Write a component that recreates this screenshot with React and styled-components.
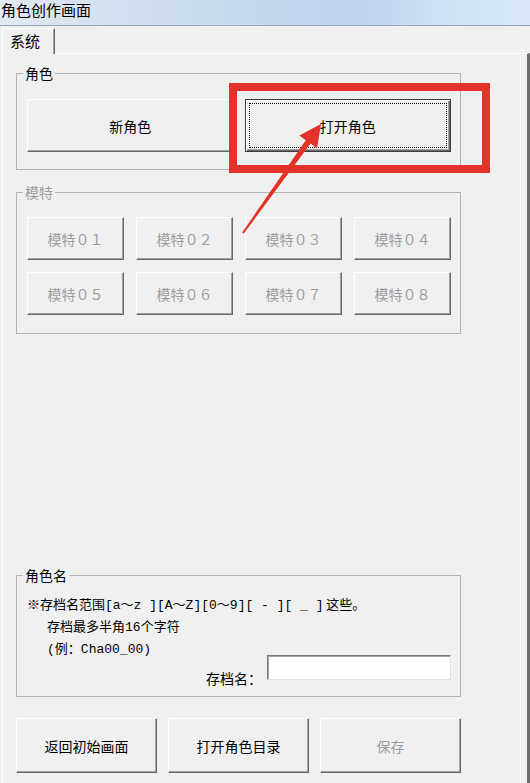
import React from "react";
import styled, { createGlobalStyle } from "styled-components";

const GlobalStyle = createGlobalStyle`
  html, body {
    margin: 0;
    padding: 0;
    background: #f0f0f0;
  }
  body {
    font-family: "Noto Sans CJK SC", "Noto Sans", sans-serif;
    color: #000;
    overflow: hidden;
  }
`;

const Window = styled.div`
  position: relative;
  width: 530px;
  height: 783px;
  display: flex;
  flex-direction: column;
  background: #f0f0f0;
  overflow: hidden;
`;

const TitleBar = styled.div`
  flex: none;
  height: 26px;
  padding: 1px 0 0 1px;
  box-sizing: border-box;
  background: linear-gradient(
    90deg,
    #e2e9f1 0%,
    #d3e1ef 20%,
    #c6d9ee 45%,
    #bcd2ee 68%,
    #cde0f5 82%,
    #d8e8f9 100%
  );
  border-bottom: 1px solid #98a6b6;
  font-size: 15px;
  line-height: 18px;
  white-space: nowrap;
`;

const TabStrip = styled.div`
  flex: none;
  height: 27px;
  display: flex;
  align-items: flex-end;
  padding-left: 2px;
`;

const Tab = styled.div`
  position: relative;
  z-index: 1;
  width: 53px;
  height: 26px;
  margin-bottom: -1px;
  box-sizing: border-box;
  padding-left: 7px;
  background: #f0f0f0;
  border-top: 1px solid #fff;
  border-left: 1px solid #fff;
  border-right: 1px solid #696969;
  box-shadow: inset -1px 0 0 #a0a0a0;
  font-size: 15px;
  line-height: 24px;
`;

const Panel = styled.div`
  flex: 1;
  min-height: 0;
  margin-left: 2px;
  display: flex;
  flex-direction: column;
  padding: 11px 0 10px 13px;
  border-top: 1px solid #fff;
  border-left: 1px solid #fff;
  border-right: 3px solid #6d6d6d;
`;

const Group = styled.fieldset`
  margin: ${(p) => p.$margin || "0"};
  width: 445px;
  min-width: 0;
  box-sizing: border-box;
  border: 1px solid #b4b4b4;
  padding: ${(p) => p.$pad};
`;

const Legend = styled.legend`
  margin-left: -4px;
  padding: 0 2px;
  height: 16px;
  font-size: 14px;
  line-height: 16px;
  color: ${(p) => (p.$disabled ? "#9d9d9d" : "#000")};
`;

const Grid = styled.div`
  display: grid;
  grid-template-columns: repeat(${(p) => p.$cols}, 1fr);
  column-gap: ${(p) => p.$gap}px;
  row-gap: 12px;
`;

const Button = styled.button`
  box-sizing: border-box;
  width: ${(p) => (p.$w ? `${p.$w}px` : "auto")};
  height: ${(p) => p.$h}px;
  padding: 0;
  background: #f0f0f0;
  font-family: "Noto Sans CJK SC", "Noto Sans", sans-serif;
  font-size: 14px;
  color: ${(p) => (p.disabled ? "#9d9d9d" : "#000")};
  border: 1px solid;
  border-color: #fff #696969 #696969 #fff;
  box-shadow: inset -1px -1px 0 #a0a0a0;
  white-space: nowrap;
`;

const DefaultButton = styled(Button)`
  border: 1px solid #3c3c3c;
  box-shadow: inset 1px 1px 0 #fff, inset -1px -1px 0 #696969,
    inset -2px -2px 0 #a0a0a0;
  outline: 1px dotted #000;
  outline-offset: -5px;
`;

const Note = styled.div`
  height: 22px;
  overflow: hidden;
  font-size: 13px;
  line-height: 22px;
  padding-left: ${(p) => p.$indent || 0}px;
  white-space: nowrap;
`;

const Mono = styled.span`
  font-family: "Liberation Mono", "Noto Sans CJK SC", monospace;
  font-size: 13px;
  line-height: 1;
`;

const FieldRow = styled.div`
  display: flex;
  justify-content: flex-end;
  align-items: flex-end;
  margin-top: -4px;
`;

const FieldLabel = styled.span`
  font-size: 14px;
  line-height: 16px;
  margin: 0 5px -6px 0;
`;

const TextBox = styled.input`
  width: 184px;
  height: 25px;
  box-sizing: border-box;
  margin: 0;
  background: #fff;
  border: 1px solid;
  border-color: #7a7a7a #e3e3e3 #e3e3e3 #7a7a7a;
  box-shadow: inset 1px 1px 0 #a0a0a0;
`;

const BottomRow = styled.div`
  display: flex;
  gap: 11px;
  margin-top: 21px;
`;

const Overlay = styled.svg`
  position: absolute;
  left: 0;
  top: 0;
  pointer-events: none;
`;

const models = ["０１", "０２", "０３", "０４", "０５", "０６", "０７", "０８"];

export default function App() {
  return (
    <>
      <GlobalStyle />
      <Window>
        <TitleBar>角色创作画面</TitleBar>
        <TabStrip>
          <Tab>系统</Tab>
        </TabStrip>
        <Panel>
          <Group $pad="18px 9px 17px 10px">
            <Legend>角色</Legend>
            <Grid $cols={2} $gap={11}>
              <Button $h={53}>新角色</Button>
              <DefaultButton $h={53}>打开角色</DefaultButton>
            </Grid>
          </Group>

          <Group $margin="14px 0 0" $pad="17px 9px 18px 10px" disabled>
            <Legend $disabled>模特</Legend>
            <Grid $cols={4} $gap={12}>
              {models.map((n) => (
                <Button key={n} $h={43} disabled>
                  模特{n}
                </Button>
              ))}
            </Grid>
          </Group>

          <Group $margin="auto 0 0" $pad="10px 9px 16px 10px">
            <Legend>角色名</Legend>
            <Note>
              ※存档名范围<Mono>[a～z ][A～Z][0～9][ - ][ _ ]</Mono> 这些。
            </Note>
            <Note $indent={20}>
              存档最多半角<Mono>16</Mono>个字符
            </Note>
            <Note $indent={20}>
              <Mono>(</Mono>例：<Mono>Cha00_00)</Mono>
            </Note>
            <FieldRow>
              <FieldLabel>存档名：</FieldLabel>
              <TextBox type="text" />
            </FieldRow>
          </Group>

          <BottomRow>
            <Button $w={141} $h={55}>返回初始画面</Button>
            <Button $w={141} $h={55}>打开角色目录</Button>
            <Button $w={141} $h={55} disabled>保存</Button>
          </BottomRow>
        </Panel>

        <Overlay width="530" height="783" viewBox="0 0 530 783">
          <rect
            x="233"
            y="87"
            width="253"
            height="82"
            fill="none"
            stroke="#e2322a"
            strokeWidth="8"
          />
          <polygon
            fill="#e2322a"
            points="321,124 317.1,148.3 310.6,143.6 243.8,233.6 242.2,232.4 305.8,140.2 299.3,135.5"
          />
        </Overlay>
      </Window>
    </>
  );
}
